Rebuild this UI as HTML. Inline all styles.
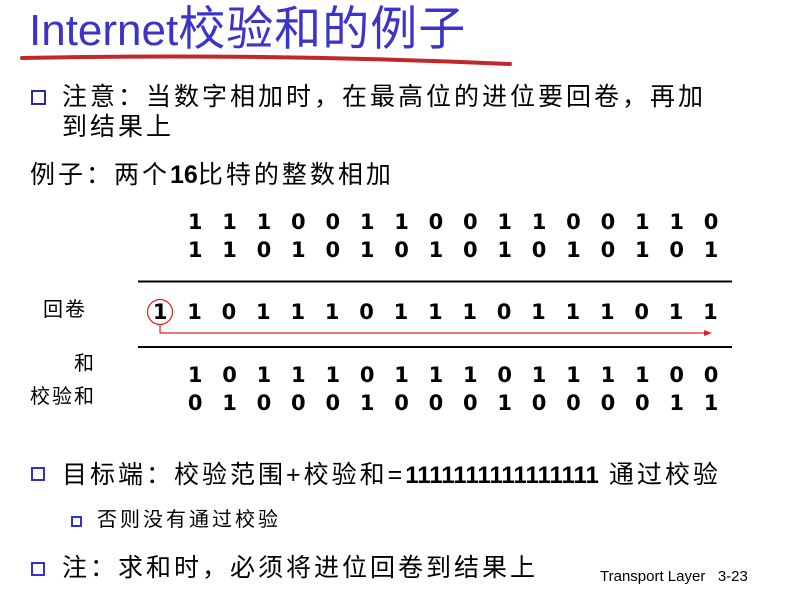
<!DOCTYPE html>
<html><head><meta charset="utf-8"><style>
body{margin:0;width:790px;height:593px;background:#fff;position:relative;overflow:hidden;font-family:"Liberation Sans","Noto Sans CJK SC",sans-serif;color:#000}
.a{position:absolute;white-space:nowrap}
.row{position:absolute;left:178px;display:flex;font-weight:bold;font-size:21px;line-height:24px;font-family:"DejaVu Sans","Liberation Sans",sans-serif}
.row span{width:34.4px;text-align:center}
.sq{position:absolute;width:10px;height:10px;border:2.5px solid #3333cc;background:#fff}
.t{font-size:25px;line-height:30px;letter-spacing:3px}
.l{font-size:20px;line-height:24px;letter-spacing:2px}
</style></head><body>
<div class="a" style="left:29px;top:2px;font-size:47px;line-height:54px;color:#3a35c8;letter-spacing:1px"><span style="font-size:44px;letter-spacing:0">Internet</span>校验和的例子</div>
<svg class="a" style="left:0;top:0" width="790" height="593">
<path d="M22 58 Q260 53 510 64" stroke="#c0282a" stroke-width="4" fill="none" stroke-linecap="round"/>
<line x1="138" y1="281.5" x2="732" y2="281.5" stroke="#000" stroke-width="2"/>
<line x1="138" y1="347" x2="732" y2="347" stroke="#000" stroke-width="2"/>
<circle cx="160" cy="312" r="12.5" stroke="#e02020" stroke-width="1.2" fill="none"/>
<path d="M160 324.5 V333 H708" stroke="#e02020" stroke-width="1.2" fill="none"/>
<path d="M704 330 L712 333 L704 336 Z" fill="#e02020"/>
</svg>
<div class="sq" style="left:31px;top:90px;border-color:#2a2aa0;border-width:2px;width:11px;height:11px"></div>
<div class="a t" style="left:62px;top:82px">注意：当数字相加时，在最高位的进位要回卷，再加</div>
<div class="a t" style="left:62px;top:112px">到结果上</div>
<div class="a t" style="left:30px;top:160px">例子：两个<b style="letter-spacing:0">16</b>比特的整数相加</div>
<div class="row" style="top:210px"><span>1</span><span>1</span><span>1</span><span>0</span><span>0</span><span>1</span><span>1</span><span>0</span><span>0</span><span>1</span><span>1</span><span>0</span><span>0</span><span>1</span><span>1</span><span>0</span></div>
<div class="row" style="top:238px"><span>1</span><span>1</span><span>0</span><span>1</span><span>0</span><span>1</span><span>0</span><span>1</span><span>0</span><span>1</span><span>0</span><span>1</span><span>0</span><span>1</span><span>0</span><span>1</span></div>
<div class="row" style="top:300px;left:143px"><span>1</span><span>1</span><span>0</span><span>1</span><span>1</span><span>1</span><span>0</span><span>1</span><span>1</span><span>1</span><span>0</span><span>1</span><span>1</span><span>1</span><span>0</span><span>1</span><span>1</span></div>
<div class="row" style="top:363px"><span>1</span><span>0</span><span>1</span><span>1</span><span>1</span><span>0</span><span>1</span><span>1</span><span>1</span><span>0</span><span>1</span><span>1</span><span>1</span><span>1</span><span>0</span><span>0</span></div>
<div class="row" style="top:391px"><span>0</span><span>1</span><span>0</span><span>0</span><span>0</span><span>1</span><span>0</span><span>0</span><span>0</span><span>1</span><span>0</span><span>0</span><span>0</span><span>0</span><span>1</span><span>1</span></div>
<div class="a l" style="left:43px;top:298px">回卷</div>
<div class="a l" style="left:74px;top:352px">和</div>
<div class="a l" style="left:30px;top:385px">校验和</div>
<div class="sq" style="left:31px;top:467px"></div>
<div class="a t" style="left:62px;top:460px">目标端：校验范围+校验和=<b style="letter-spacing:0;font-size:24px">1111111111111111</b> 通过校验</div>
<div class="sq" style="left:71px;top:516px;width:7px;height:7px;border-width:2px"></div>
<div class="a l" style="left:97px;top:508px;letter-spacing:3px">否则没有通过校验</div>
<div class="sq" style="left:31px;top:562px"></div>
<div class="a t" style="left:62px;top:553px">注：求和时，必须将进位回卷到结果上</div>
<div class="a" style="left:600px;top:567px;font-size:15px;line-height:20px">Transport Layer&nbsp;&nbsp;&nbsp;3-23</div>
</body></html>
